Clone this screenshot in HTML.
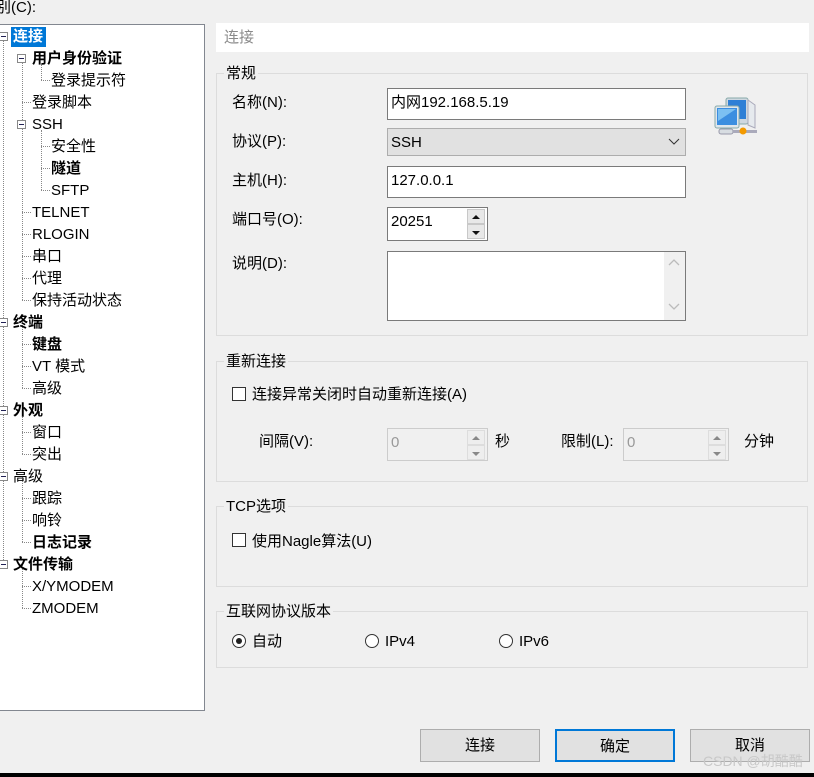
<!DOCTYPE html>
<html><head><meta charset="utf-8"><style>
*{margin:0;padding:0;box-sizing:border-box}
body{width:814px;height:777px;background:#f0f0f0;position:relative;overflow:hidden;font-family:"Liberation Sans","Noto Sans CJK SC",sans-serif;font-size:15px;color:#000}
.a{position:absolute;white-space:nowrap;line-height:23px}
.b{font-weight:bold}
.box{position:absolute}
.grp{position:absolute;border:1px solid #dcdcdc;left:216px;width:592px}
.inp{position:absolute;background:#fff;border:1px solid #7a7a7a}
.btn{position:absolute;background:#e1e1e1;border:1px solid #adadad;text-align:center;line-height:31px}
.chk{position:absolute;width:14px;height:14px;border:1px solid #333;background:#fff}
.rad{position:absolute;width:14px;height:14px;border:1px solid #333;border-radius:50%;background:#fff}
.sp{position:absolute;width:18px;border:1px solid #c8c8c8;background:#e8e8e8}
.vl{position:absolute;border-left:1px dotted #888;width:0}
.hl{position:absolute;border-top:1px dotted #888;height:0}
.pm{position:absolute;width:9px;height:9px;border:1px solid #888;background:#fff}
.pm:after{content:"";position:absolute;left:1px;top:3px;width:5px;height:1px;background:#225}
</style></head><body>
<div class="a" style="left:-4px;top:-4px">别(C):</div>
<div class="box" style="left:-1px;top:24px;width:206px;height:687px;background:#fff;border:1px solid #828790"></div>
<div class="vl" style="left:3px;top:36px;height:530px"></div>
<div class="vl" style="left:22px;top:58px;height:242px"></div>
<div class="vl" style="left:41px;top:64px;height:16px"></div>
<div class="vl" style="left:41px;top:130px;height:60px"></div>
<div class="vl" style="left:22px;top:322px;height:66px"></div>
<div class="vl" style="left:22px;top:410px;height:44px"></div>
<div class="vl" style="left:22px;top:476px;height:66px"></div>
<div class="vl" style="left:22px;top:564px;height:44px"></div>
<div class="pm" style="left:-1px;top:32px"></div>
<div class="pm" style="left:17px;top:54px"></div>
<div class="pm" style="left:17px;top:120px"></div>
<div class="pm" style="left:-1px;top:318px"></div>
<div class="pm" style="left:-1px;top:406px"></div>
<div class="pm" style="left:-1px;top:472px"></div>
<div class="pm" style="left:-1px;top:560px"></div>
<div class="hl" style="left:41px;top:80px;width:9px"></div>
<div class="hl" style="left:22px;top:102px;width:9px"></div>
<div class="hl" style="left:41px;top:146px;width:9px"></div>
<div class="hl" style="left:41px;top:168px;width:9px"></div>
<div class="hl" style="left:41px;top:190px;width:9px"></div>
<div class="hl" style="left:22px;top:212px;width:9px"></div>
<div class="hl" style="left:22px;top:234px;width:9px"></div>
<div class="hl" style="left:22px;top:256px;width:9px"></div>
<div class="hl" style="left:22px;top:278px;width:9px"></div>
<div class="hl" style="left:22px;top:300px;width:9px"></div>
<div class="hl" style="left:22px;top:344px;width:9px"></div>
<div class="hl" style="left:22px;top:366px;width:9px"></div>
<div class="hl" style="left:22px;top:388px;width:9px"></div>
<div class="hl" style="left:22px;top:432px;width:9px"></div>
<div class="hl" style="left:22px;top:454px;width:9px"></div>
<div class="hl" style="left:22px;top:498px;width:9px"></div>
<div class="hl" style="left:22px;top:520px;width:9px"></div>
<div class="hl" style="left:22px;top:542px;width:9px"></div>
<div class="hl" style="left:22px;top:586px;width:9px"></div>
<div class="hl" style="left:22px;top:608px;width:9px"></div>
<div class="box" style="left:11px;top:27px;width:35px;height:20px;background:#0078d7"></div>
<div class="a b" style="left:13px;top:25px;color:#fff">连接</div>
<div class="a b" style="left:32px;top:47px">用户身份验证</div>
<div class="a" style="left:51px;top:69px">登录提示符</div>
<div class="a" style="left:32px;top:91px">登录脚本</div>
<div class="a" style="left:32px;top:113px">SSH</div>
<div class="a" style="left:51px;top:135px">安全性</div>
<div class="a b" style="left:51px;top:157px">隧道</div>
<div class="a" style="left:51px;top:179px">SFTP</div>
<div class="a" style="left:32px;top:201px">TELNET</div>
<div class="a" style="left:32px;top:223px">RLOGIN</div>
<div class="a" style="left:32px;top:245px">串口</div>
<div class="a" style="left:32px;top:267px">代理</div>
<div class="a" style="left:32px;top:289px">保持活动状态</div>
<div class="a b" style="left:13px;top:311px">终端</div>
<div class="a b" style="left:32px;top:333px">键盘</div>
<div class="a" style="left:32px;top:355px">VT 模式</div>
<div class="a" style="left:32px;top:377px">高级</div>
<div class="a b" style="left:13px;top:399px">外观</div>
<div class="a" style="left:32px;top:421px">窗口</div>
<div class="a" style="left:32px;top:443px">突出</div>
<div class="a" style="left:13px;top:465px">高级</div>
<div class="a" style="left:32px;top:487px">跟踪</div>
<div class="a" style="left:32px;top:509px">响铃</div>
<div class="a b" style="left:32px;top:531px">日志记录</div>
<div class="a b" style="left:13px;top:553px">文件传输</div>
<div class="a" style="left:32px;top:575px">X/YMODEM</div>
<div class="a" style="left:32px;top:597px">ZMODEM</div>

<div class="box" style="left:216px;top:23px;width:593px;height:29px;background:#fff"></div>
<div class="a" style="left:224px;top:26px;color:#8a8a8a">连接</div>

<div class="grp" style="top:73px;height:263px"></div>
<div class="a" style="left:224px;top:62px;background:#f0f0f0;padding:0 2px">常规</div>
<div class="a" style="left:232px;top:91px">名称(N):</div>
<div class="inp" style="left:387px;top:88px;width:299px;height:32px"></div>
<div class="a" style="left:391px;top:91px">内网192.168.5.19</div>
<div class="a" style="left:232px;top:130px">协议(P):</div>
<div class="box" style="left:387px;top:128px;width:299px;height:28px;background:#e1e1e1;border:1px solid #adadad"></div>
<div class="a" style="left:391px;top:131px">SSH</div>
<svg class="box" style="left:668px;top:138px" width="12" height="8"><path d="M1 1L6 6L11 1" fill="none" stroke="#333" stroke-width="1"/></svg>
<div class="a" style="left:232px;top:169px">主机(H):</div>
<div class="inp" style="left:387px;top:166px;width:299px;height:32px"></div>
<div class="a" style="left:391px;top:169px">127.0.0.1</div>
<div class="a" style="left:232px;top:208px">端口号(O):</div>
<div class="inp" style="left:387px;top:207px;width:101px;height:34px"></div>
<div class="a" style="left:391px;top:210px">20251</div>
<div class="sp" style="left:467px;top:209px;height:15px"></div>
<div class="sp" style="left:467px;top:224px;height:15px"></div>
<svg class="box" style="left:471px;top:213px" width="10" height="24"><path d="M1 6L5 2L9 6Z M1 18L9 18L5 22Z" fill="#111"/></svg>
<div class="a" style="left:232px;top:252px">说明(D):</div>
<div class="inp" style="left:387px;top:251px;width:299px;height:70px"></div>
<div class="box" style="left:664px;top:252px;width:21px;height:68px;background:#f0f0f0"></div>
<svg class="box" style="left:667px;top:257px" width="14" height="60"><path d="M2 8L7 3L12 8 M2 47L7 52L12 47" fill="none" stroke="#bbb" stroke-width="1.3"/></svg>
<svg class="box" style="left:714px;top:96px" width="46" height="44" viewBox="0 0 46 44">
<rect x="12" y="2" width="22" height="26" rx="2" fill="#cfd8e0" stroke="#8aa"/>
<rect x="14" y="4" width="18" height="19" fill="#2e7fd6"/>
<path d="M34 4L41 9L41 32L34 29Z" fill="#e6eaee" stroke="#aab"/>
<rect x="1" y="10" width="24" height="22" rx="2" fill="#dfe6ec" stroke="#8aa"/>
<rect x="3" y="12" width="20" height="17" fill="#3c8ee0"/>
<path d="M4 13L22 13L4 25Z" fill="#7cc0f2"/>
<rect x="5" y="33" width="14" height="5" rx="2" fill="#d8dde2" stroke="#99a"/>
<rect x="19" y="34" width="24" height="3" fill="#aab"/>
<circle cx="29" cy="35" r="3.5" fill="#f39a00"/>
</svg>

<div class="grp" style="top:361px;height:121px"></div>
<div class="a" style="left:224px;top:350px;background:#f0f0f0;padding:0 2px">重新连接</div>
<div class="chk" style="left:232px;top:387px"></div>
<div class="a" style="left:252px;top:383px">连接异常关闭时自动重新连接(A)</div>
<div class="a" style="left:259px;top:430px">间隔(V):</div>
<div class="box" style="left:387px;top:428px;width:101px;height:33px;border:1px solid #ccc;background:#f0f0f0"></div>
<div class="a" style="left:391px;top:431px;color:#999">0</div>
<div class="sp" style="left:467px;top:430px;height:15px;border-color:#ddd;background:#eee"></div>
<div class="sp" style="left:467px;top:445px;height:15px;border-color:#ddd;background:#eee"></div>
<svg class="box" style="left:471px;top:434px" width="10" height="24"><path d="M1 6L5 2L9 6Z M1 18L9 18L5 22Z" fill="#888"/></svg>
<div class="a" style="left:495px;top:430px">秒</div>
<div class="a" style="left:561px;top:430px">限制(L):</div>
<div class="box" style="left:623px;top:428px;width:106px;height:33px;border:1px solid #ccc;background:#f0f0f0"></div>
<div class="a" style="left:627px;top:431px;color:#999">0</div>
<div class="sp" style="left:708px;top:430px;height:15px;border-color:#ddd;background:#eee"></div>
<div class="sp" style="left:708px;top:445px;height:15px;border-color:#ddd;background:#eee"></div>
<svg class="box" style="left:712px;top:434px" width="10" height="24"><path d="M1 6L5 2L9 6Z M1 18L9 18L5 22Z" fill="#888"/></svg>
<div class="a" style="left:744px;top:430px">分钟</div>

<div class="grp" style="top:506px;height:81px"></div>
<div class="a" style="left:224px;top:495px;background:#f0f0f0;padding:0 2px">TCP选项</div>
<div class="chk" style="left:232px;top:533px"></div>
<div class="a" style="left:252px;top:530px">使用Nagle算法(U)</div>

<div class="grp" style="top:611px;height:57px"></div>
<div class="a" style="left:224px;top:600px;background:#f0f0f0;padding:0 2px">互联网协议版本</div>
<div class="rad" style="left:232px;top:634px"></div>
<div class="box" style="left:236px;top:638px;width:6px;height:6px;border-radius:50%;background:#222"></div>
<div class="a" style="left:252px;top:630px">自动</div>
<div class="rad" style="left:365px;top:634px"></div>
<div class="a" style="left:385px;top:630px">IPv4</div>
<div class="rad" style="left:499px;top:634px"></div>
<div class="a" style="left:519px;top:630px">IPv6</div>

<div class="btn" style="left:420px;top:729px;width:120px;height:33px">连接</div>
<div class="btn" style="left:555px;top:729px;width:120px;height:33px;border:2px solid #0078d7">确定</div>
<div class="btn" style="left:690px;top:729px;width:120px;height:33px">取消</div>
<div class="a" style="left:703px;top:750px;color:#c8c8c8;font-size:14px">CSDN @胡酷酷</div>
<div class="box" style="left:0;top:773px;width:814px;height:4px;background:#000"></div>
</body></html>
